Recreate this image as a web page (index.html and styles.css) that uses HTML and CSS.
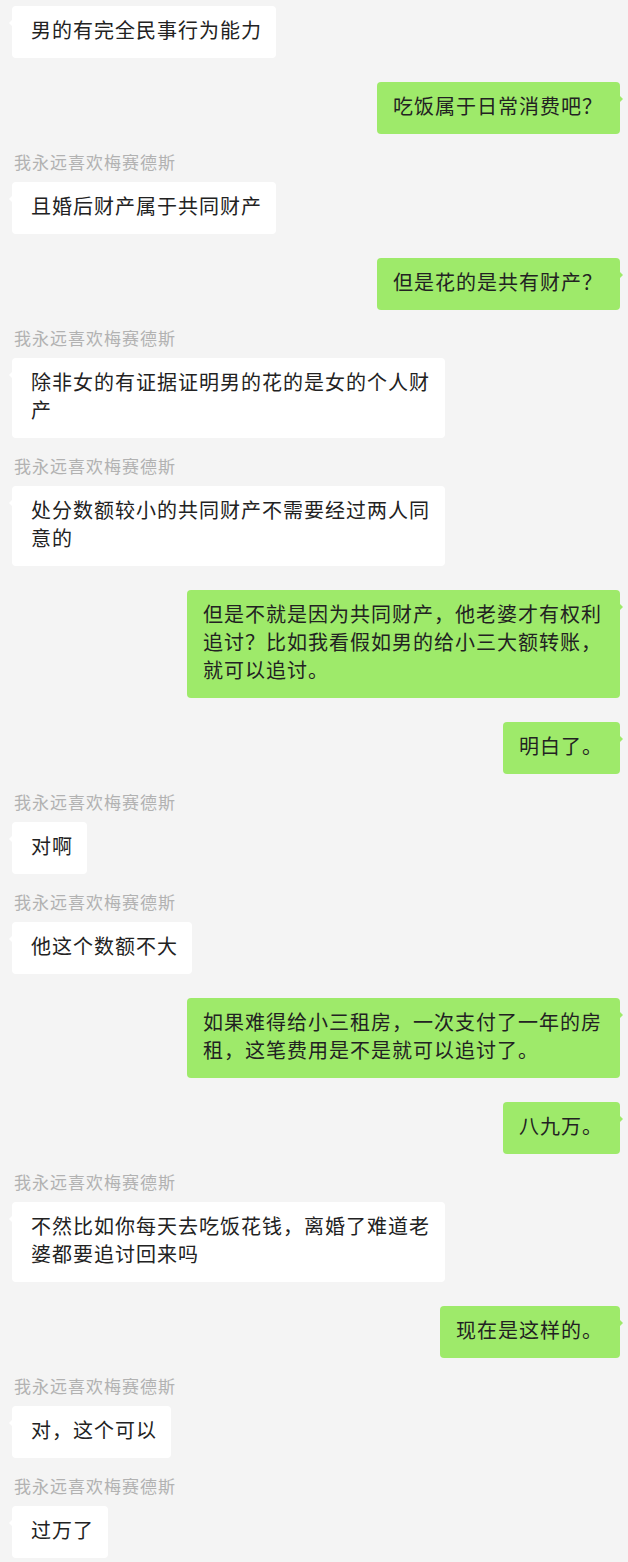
FILE: index.html
```html
<!DOCTYPE html>
<html lang="zh-CN">
<head>
    <meta charset="UTF-8">
    <meta name="viewport" content="width=device-width, initial-scale=1.0">
    <title>聊天记录</title>
    <link rel="stylesheet" href="styles.css">
</head>
<body>

    <div class="chat">

        <div class="msg left">
            <div class="bubble">男的有完全民事行为能力</div>
        </div>

        <div class="msg right">
            <div class="bubble">吃饭属于日常消费吧？</div>
        </div>

        <div class="msg left named">
            <div class="name">我永远喜欢梅赛德斯</div>
            <div class="bubble">且婚后财产属于共同财产</div>
        </div>

        <div class="msg right">
            <div class="bubble">但是花的是共有财产？</div>
        </div>

        <div class="msg left named">
            <div class="name">我永远喜欢梅赛德斯</div>
            <div class="bubble">除非女的有证据证明男的花的是女的个人财产</div>
        </div>

        <div class="msg left named">
            <div class="name">我永远喜欢梅赛德斯</div>
            <div class="bubble">处分数额较小的共同财产不需要经过两人同意的</div>
        </div>

        <div class="msg right">
            <div class="bubble">但是不就是因为共同财产，他老婆才有权利追讨？比如我看假如男的给小三大额转账，就可以追讨。</div>
        </div>

        <div class="msg right">
            <div class="bubble">明白了。</div>
        </div>

        <div class="msg left named">
            <div class="name">我永远喜欢梅赛德斯</div>
            <div class="bubble">对啊</div>
        </div>

        <div class="msg left named">
            <div class="name">我永远喜欢梅赛德斯</div>
            <div class="bubble">他这个数额不大</div>
        </div>

        <div class="msg right">
            <div class="bubble">如果难得给小三租房，一次支付了一年的房租，这笔费用是不是就可以追讨了。</div>
        </div>

        <div class="msg right">
            <div class="bubble">八九万。</div>
        </div>

        <div class="msg left named">
            <div class="name">我永远喜欢梅赛德斯</div>
            <div class="bubble">不然比如你每天去吃饭花钱，离婚了难道老婆都要追讨回来吗</div>
        </div>

        <div class="msg right">
            <div class="bubble">现在是这样的。</div>
        </div>

        <div class="msg left named">
            <div class="name">我永远喜欢梅赛德斯</div>
            <div class="bubble">对，这个可以</div>
        </div>

        <div class="msg left named">
            <div class="name">我永远喜欢梅赛德斯</div>
            <div class="bubble">过万了</div>
        </div>

    </div>

</body>
</html>
```

FILE: styles.css
```css
* {
    box-sizing: border-box;
}
body {
    margin: 0;
    background-color: #f4f4f4;
    font-family: "Noto Sans CJK SC", "Noto Sans", sans-serif;
}
.chat {
    display: flex;
    flex-direction: column;
    padding: 6px 8px 0 12px;
}
.msg {
    display: flex;
    flex-direction: column;
    margin-top: 24px;
}
.msg:first-child {
    margin-top: 0;
}
.msg.named {
    margin-top: 16px;
}
.msg.left {
    align-items: flex-start;
}
.msg.right {
    align-items: flex-end;
}
.name {
    padding-left: 2px;
    margin-bottom: 8px;
    font-size: 17px;
    letter-spacing: 1px;
    line-height: 24px;
    color: #b2b2b2;
}
.bubble {
    position: relative;
    max-width: 433px;
    padding: 10px 14px 14px 19px;
    font-size: 20px;
    letter-spacing: 1px;
    line-height: 28px;
    color: #222;
    background: #fff;
    border-radius: 4px;
}
.right .bubble {
    padding: 10px 17px 14px 16px;
    background: #9eea6a;
}
/* little arrow beside the bubble */
.bubble::before {
    content: "";
    position: absolute;
    top: 13px;
    border: 4px solid transparent;
}
.left .bubble::before {
    left: -7px;
    border-right-color: #fff;
}
.right .bubble::before {
    right: -7px;
    border-left-color: #9eea6a;
}
```
